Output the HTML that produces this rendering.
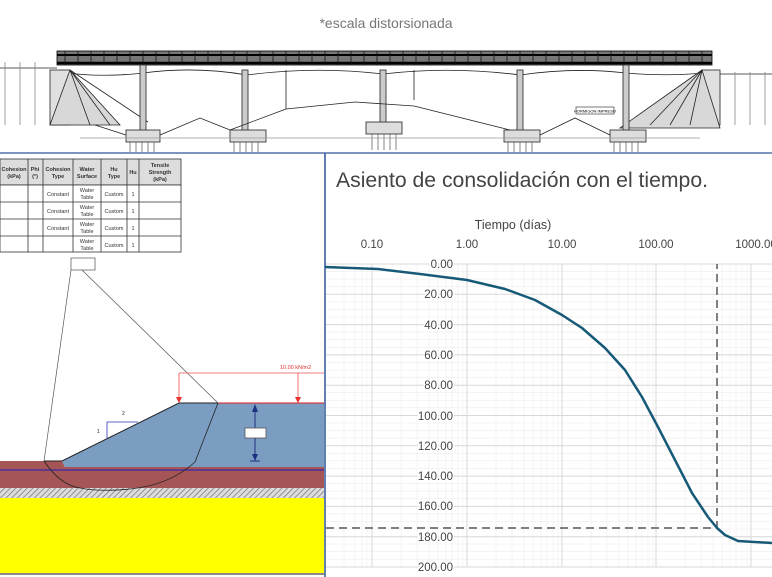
<!DOCTYPE html>
<html><head><meta charset="utf-8"><style>
html,body{margin:0;padding:0;background:#fff;width:772px;height:577px;overflow:hidden;font-family:"Liberation Sans",sans-serif}
svg{position:absolute;left:0;top:0}
</style></head><body>
<svg width="772" height="577" viewBox="0 0 772 577" xmlns="http://www.w3.org/2000/svg">
<text x="386" y="28" text-anchor="middle" font-size="14" fill="#777" font-family="Liberation Sans,sans-serif">*escala distorsionada</text>
<!-- bridge -->
<g stroke="#222" fill="none" stroke-width="0.8">
<line x1="0" y1="68" x2="57" y2="68"/><line x1="712" y1="74" x2="772" y2="74"/>
<rect x="57" y="51" width="655" height="14" fill="#777" stroke="#000"/>
<line x1="57" y1="55" x2="712" y2="55" stroke="#000" stroke-width="2"/>
<line x1="57" y1="63" x2="712" y2="63" stroke="#000" stroke-width="2.5"/>
<path stroke="#111" d="M65 51V65M78 51V65M91 51V65M104 51V65M117 51V65M130 51V65M143 51V65M156 51V65M169 51V65M182 51V65M195 51V65M208 51V65M221 51V65M234 51V65M247 51V65M260 51V65M273 51V65M286 51V65M299 51V65M312 51V65M325 51V65M338 51V65M351 51V65M364 51V65M377 51V65M390 51V65M403 51V65M416 51V65M429 51V65M442 51V65M455 51V65M468 51V65M481 51V65M494 51V65M507 51V65M520 51V65M533 51V65M546 51V65M559 51V65M572 51V65M585 51V65M598 51V65M611 51V65M624 51V65M637 51V65M650 51V65M663 51V65M676 51V65M689 51V65M702 51V65"/>
<path d="M60 72 Q100 78 143 73 Q195 66 247 75 Q315 66 383 74 Q450 66 520 75 Q575 67 626 73 Q670 77 712 72"/>
<path d="M5 62V125M20 62V125M35 62V125M735 72V125M750 72V125M765 72V125" stroke="#888"/>
<rect x="50" y="70" width="20" height="55" fill="#e0e0e0"/>
<rect x="702" y="70" width="18" height="55" fill="#e0e0e0"/>
<path d="M70 70 L120 125 L50 125Z" fill="#d8d8d8"/><path d="M702 70 L620 128 L720 128Z" fill="#d8d8d8"/>
<path d="M70 70L148 122M70 70L90 125M70 70L110 125M702 70L650 125M702 70L670 125M702 70L690 125"/>
<rect x="140" y="65" width="6" height="70" fill="#ccc"/><rect x="242" y="70" width="6" height="65" fill="#ccc"/>
<rect x="380" y="70" width="6" height="60" fill="#ccc"/><rect x="517" y="70" width="6" height="65" fill="#ccc"/><rect x="623" y="65" width="6" height="70" fill="#ccc"/>
<rect x="126" y="130" width="34" height="12" fill="#ddd"/><rect x="230" y="130" width="36" height="12" fill="#ddd"/>
<rect x="366" y="122" width="36" height="12" fill="#ddd"/><rect x="504" y="130" width="36" height="12" fill="#ddd"/><rect x="610" y="130" width="36" height="12" fill="#ddd"/>
<path d="M130 142V152M136 142V152M142 142V152M148 142V152M154 142V152M234 142V152M240 142V152M246 142V152M252 142V152M258 142V152M372 134V150M378 134V150M384 134V150M390 134V150M396 134V150M508 142V152M514 142V152M520 142V152M526 142V152M532 142V152M614 142V152M620 142V152M626 142V152M632 142V152M638 142V152" stroke="#666"/>
<path d="M286 70V109M414 70V100M286 109 L355 102 L414 106 M230 130 L286 109 M414 106 L510 130 M95 125 L126 135 M160 135 L200 118 L230 130 M540 135 L575 118 L610 135"/>
<line x1="80" y1="138" x2="700" y2="138" stroke="#999"/>
<rect x="576" y="107" width="38" height="7" fill="#fff" stroke-width="0.6"/>
<text x="595" y="112.5" font-size="4" fill="#000" stroke="none" text-anchor="middle">HORMIGON IMPRESO</text>
</g>
<line x1="0" y1="153" x2="772" y2="153" stroke="#2f5597" stroke-width="1.2"/>
<!-- left panel -->
<line x1="325" y1="153" x2="325" y2="577" stroke="#2f5597" stroke-width="1.5"/>
<g font-size="5.5" fill="#333" text-anchor="middle" font-family="Liberation Sans,sans-serif">
<rect x="0" y="159" width="181" height="26" fill="#ddd" stroke="#333" stroke-width="0.8"/>
<rect x="0" y="185" width="181" height="67" fill="#fff" stroke="#333" stroke-width="0.8"/>
<path d="M0 202H181M0 219H181M0 236H181M28 159V252M43 159V252M73 159V252M101 159V252M127 159V252M139 159V252" stroke="#333" stroke-width="0.8"/>
<g font-weight="bold"><text x="14" y="171">Cohesion</text><text x="14" y="178">(kPa)</text><text x="35" y="171">Phi</text><text x="35" y="178">(°)</text><text x="58" y="171">Cohesion</text><text x="58" y="178">Type</text><text x="87" y="171">Water</text><text x="87" y="178">Surface</text><text x="114" y="171">Hu</text><text x="114" y="178">Type</text><text x="133" y="174">Hu</text><text x="160" y="167">Tensile</text><text x="160" y="174">Strength</text><text x="160" y="181">(kPa)</text></g>
<text x="58" y="196">Constant</text><text x="58" y="213">Constant</text><text x="58" y="230">Constant</text>
<text x="87" y="192">Water</text><text x="87" y="199">Table</text><text x="87" y="209">Water</text><text x="87" y="216">Table</text><text x="87" y="226">Water</text><text x="87" y="233">Table</text><text x="87" y="243">Water</text><text x="87" y="250">Table</text>
<text x="114" y="196">Custom</text><text x="114" y="213">Custom</text><text x="114" y="230">Custom</text><text x="114" y="247">Custom</text>
<text x="133" y="196">1</text><text x="133" y="213">1</text><text x="133" y="230">1</text><text x="133" y="247">1</text>
</g>
<defs><pattern id="h" width="4" height="4" patternUnits="userSpaceOnUse" patternTransform="rotate(45)"><rect width="4" height="4" fill="#ddd"/><line x1="0" y1="0" x2="0" y2="4" stroke="#777" stroke-width="1.5"/></pattern></defs>
<rect x="0" y="498" width="324" height="75" fill="#ffff00"/>
<rect x="0" y="488" width="324" height="10" fill="url(#h)"/>
<rect x="0" y="467" width="324" height="21" fill="#a65556"/>
<polygon points="0,461 62,461 65,467 0,467" fill="#a65556"/>
<polygon points="62,461 179,403 324,403 324,467 65,467" fill="#7a9dc1"/>
<line x1="0" y1="470" x2="324" y2="470" stroke="#2020c0" stroke-width="1"/>
<path d="M44 461 H62 L179 403 H218" stroke="#222" fill="none" stroke-width="1"/>
<line x1="218" y1="403" x2="324" y2="403" stroke="#e02020" stroke-width="1"/>
<path d="M107 438V422H138" stroke="#3030c0" fill="none" stroke-width="0.8"/>
<text x="97" y="433" font-size="5" fill="#222">1</text><text x="122" y="415" font-size="5" fill="#222">2</text>
<rect x="71" y="258" width="24" height="12" fill="#fff" stroke="#666" stroke-width="0.8"/>
<path d="M71 270 L44 461 M82 270 L218 403" stroke="#555" fill="none" stroke-width="0.7"/>
<path d="M44 461 Q60 485 80 488 Q100 492 130 489 Q170 485 195 462 L218 403" stroke="#222" fill="none" stroke-width="0.8"/>
<path d="M179 373 H324 M179 373 V401 M298 373 V401" stroke="#f05050" fill="none" stroke-width="0.8"/>
<path d="M176 397 L179 403 L182 397Z M295 397 L298 403 L301 397Z" fill="#f03030"/>
<text x="280" y="369" font-size="5.5" fill="#e03030">10.00 kN/m2</text>
<path d="M255 405 V461 M250 461 H260" stroke="#203080" stroke-width="1"/>
<path d="M252 412 L255 404 L258 412Z M252 454 L255 461 L258 454Z" fill="#203080"/>
<rect x="245" y="428" width="21" height="10" fill="#fff" stroke="#555" stroke-width="0.8"/>
<line x1="0" y1="574" x2="324" y2="574" stroke="#888" stroke-width="2"/>
<!-- chart -->
<text x="336" y="187" font-size="21" fill="#444" font-family="Liberation Sans,sans-serif" textLength="372" lengthAdjust="spacingAndGlyphs">Asiento de consolidación con el tiempo.</text>
<text x="513" y="229" font-size="12.5" fill="#444" text-anchor="middle">Tiempo (días)</text>
<g font-size="11.5" fill="#444" text-anchor="middle"><text x="372" y="248">0.10</text><text x="467" y="248">1.00</text><text x="562" y="248">10.00</text><text x="656" y="248">100.00</text><text x="756" y="248">1000.00</text></g>
<g stroke="#eee" stroke-width="0.6">
<path d="M326 271.6H772M326 279.1H772M326 286.7H772M326 301.9H772M326 309.4H772M326 317H772M326 332.1H772M326 339.7H772M326 347.3H772M326 362.4H772M326 370H772M326 377.6H772M326 392.7H772M326 400.3H772M326 407.8H772M326 423H772M326 430.6H772M326 438.1H772M326 453.3H772M326 460.8H772M326 468.4H772M326 483.6H772M326 491.1H772M326 498.7H772M326 513.8H772M326 521.4H772M326 529H772M326 544.1H772M326 551.7H772M326 559.2H772"/>
<path d="M344 264V567M355 264V567M362 264V567M367 264V567M401 264V567M417 264V567M429 264V567M438 264V567M446 264V567M452 264V567M458 264V567M463 264V567M496 264V567M512 264V567M524 264V567M533 264V567M541 264V567M547 264V567M553 264V567M558 264V567M591 264V567M607 264V567M619 264V567M628 264V567M636 264V567M642 264V567M648 264V567M653 264V567M685 264V567M701 264V567M713 264V567M722 264V567M730 264V567M736 264V567M742 264V567M747 264V567"/>
</g>
<g stroke="#d8d8d8" stroke-width="1">
<path d="M326 264H772M326 294.3H772M326 324.6H772M326 354.9H772M326 385.2H772M326 415.5H772M326 445.8H772M326 476.1H772M326 506.4H772M326 536.7H772M326 567H772"/>
<path d="M372 264V567M467 264V567M562 264V567M656 264V567M751 264V567"/>
</g>
<g font-size="11.5" fill="#444" text-anchor="end" stroke="#fff" stroke-width="3" paint-order="stroke">
<text x="453" y="268">0.00</text><text x="453" y="298">20.00</text><text x="453" y="329">40.00</text><text x="453" y="359">60.00</text><text x="453" y="389">80.00</text><text x="453" y="420">100.00</text><text x="453" y="450">120.00</text><text x="453" y="480">140.00</text><text x="453" y="510">160.00</text><text x="453" y="541">180.00</text><text x="453" y="571">200.00</text>
</g>
<path d="M326 528H717V264" stroke="#808080" stroke-width="2" stroke-dasharray="8,5" fill="none"/>
<path d="M325 267 L378 269 L420 274 L467 280 L505 289 L535 300 L562 315 L582 328 L605 348 L625 370 L642 397 L658 427 L675 460 L692 493 L708 517 L717 528 L725 535 L738 541 L772 543" stroke="#175a78" stroke-width="2.5" fill="none" stroke-linejoin="round"/>
</svg>
</body></html>
